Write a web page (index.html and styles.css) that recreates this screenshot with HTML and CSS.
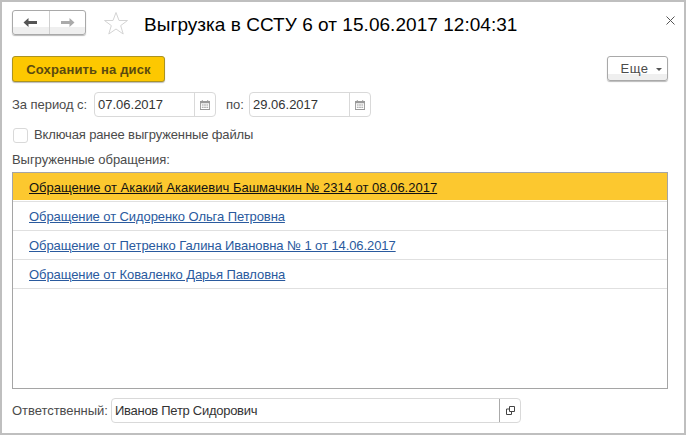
FILE: index.html
```html
<!DOCTYPE html>
<html lang="ru">
<head>
  <meta charset="UTF-8">
  <title>Выгрузка в ССТУ 6</title>
  <link rel="stylesheet" href="styles.css">
</head>
<body>
  <div class="window">
    <!-- заголовок -->
    <div class="header">
      <div class="nav">
        <button class="nav-btn">
          <svg width="15" height="11" viewBox="0 0 15 11"><path d="M0.5 5.5L5.5 1V4H14V7H5.5V10Z" fill="#555"/></svg>
        </button>
        <button class="nav-btn">
          <svg width="15" height="11" viewBox="0 0 15 11"><path d="M14.5 5.5L9.5 1V4H1V7H9.5V10Z" fill="#aaa"/></svg>
        </button>
      </div>
      <svg class="star" width="26" height="25" viewBox="0 0 26 25"><path d="M13 1.5L16 9.5H24.5L17.7 14.6L20.2 23L13 18L5.8 23L8.3 14.6L1.5 9.5H10Z" fill="#fff" stroke="#d4d4d4"/></svg>
      <h1 class="title">Выгрузка в ССТУ 6 от 15.06.2017 12:04:31</h1>
      <svg class="close" width="9" height="9" viewBox="0 0 9 9"><path d="M0.5 0.5L8.5 8.5M8.5 0.5L0.5 8.5" stroke="#555" fill="none"/></svg>
    </div>

    <!-- командная панель -->
    <div class="toolbar">
      <button class="save-btn">Сохранить на диск</button>
      <button class="more-btn">Еще<span class="caret"></span></button>
    </div>

    <!-- период -->
    <div class="period">
      <label class="label label-from">За период с:</label>
      <div class="field date-field">
        <span class="field-value">07.06.2017</span>
        <span class="field-btn">
          <svg width="10" height="10" viewBox="0 0 11 11"><path d="M0 1H2V0H3V1H8V0H9V1H11V11H0ZM1 3.5V10H10V3.5Z" fill="#999"/><path d="M2 5H4V6H2ZM4.5 5H6.5V6H4.5ZM7 5H9V6H7ZM2 7.5H4V8.5H2ZM4.5 7.5H6.5V8.5H4.5ZM7 7.5H9V8.5H7Z" fill="#999"/></svg>
        </span>
      </div>
      <label class="label label-to">по:</label>
      <div class="field date-field">
        <span class="field-value">29.06.2017</span>
        <span class="field-btn">
          <svg width="10" height="10" viewBox="0 0 11 11"><path d="M0 1H2V0H3V1H8V0H9V1H11V11H0ZM1 3.5V10H10V3.5Z" fill="#999"/><path d="M2 5H4V6H2ZM4.5 5H6.5V6H4.5ZM7 5H9V6H7ZM2 7.5H4V8.5H2ZM4.5 7.5H6.5V8.5H4.5ZM7 7.5H9V8.5H7Z" fill="#999"/></svg>
        </span>
      </div>
    </div>

    <div class="check-row">
      <span class="checkbox"></span>
      <span class="label check-label">Включая ранее выгруженные файлы</span>
    </div>

    <div class="list-title label">Выгруженные обращения:</div>

    <div class="list">
      <div class="list-row selected"><a href="#">Обращение от Акакий Акакиевич Башмачкин № 2314 от 08.06.2017</a></div>
      <div class="list-row"><a href="#">Обращение от Сидоренко Ольга Петровна</a></div>
      <div class="list-row"><a href="#">Обращение от Петренко Галина Ивановна № 1 от 14.06.2017</a></div>
      <div class="list-row"><a href="#">Обращение от Коваленко Дарья Павловна</a></div>
    </div>

    <div class="owner">
      <label class="label label-owner">Ответственный:</label>
      <div class="field owner-field">
        <span class="field-value">Иванов Петр Сидорович</span>
        <span class="field-btn owner-btn">
          <svg width="9" height="9" viewBox="0 0 9 9"><path d="M3.5 0.5H8.5V5.5H3.5Z" fill="none" stroke="#444"/><path d="M0.5 8.5V3H3M0.5 8.5H5.5V6" fill="none" stroke="#444"/></svg>
        </span>
      </div>
    </div>
  </div>
</body>
</html>
```

FILE: styles.css
```css
* {
  box-sizing: border-box;
}
body {
  margin: 0;
  font-family: "Liberation Sans", Arial, sans-serif;
  font-size: 13px;
  background-color: #fff;
}
.window {
  width: 686px;
  height: 435px;
  border: 2px solid #bfbfbf;
  padding: 0 16px 0 10px;
  background-color: #fff;
  display: flex;
  flex-direction: column;
}
.label {
  color: #4b4b4b;
  font-size: 13px;
  letter-spacing: -0.05px;
}

/* заголовок */
.header {
  display: flex;
  align-items: center;
  height: 44px;
  padding-top: 1px;
}
.nav {
  display: flex;
  flex: none;
  width: 74px;
  height: 25px;
  margin-bottom: 4px;
  border: 1px solid #a9a9a9;
  border-radius: 3px;
  background: linear-gradient(#fff 0, #fff 16px, #efefef 16px);
  box-shadow: 0 1px 1px #bbb;
}
.nav-btn {
  flex: 1;
  padding: 0;
  border: none;
  background: none;
  display: flex;
  align-items: center;
  justify-content: center;
}
.nav-btn + .nav-btn {
  border-left: 1px solid #cfcfcf;
}
.star {
  margin-left: 17px;
  margin-bottom: 2px;
}
.title {
  margin: 0 0 0 15px;
  font-size: 19px;
  font-weight: normal;
  color: #000;
  flex: 1;
  letter-spacing: 0.04px;
}
.close {
  margin-right: -7px;
  margin-bottom: 9px;
}

/* командная панель */
.toolbar {
  display: flex;
  justify-content: space-between;
  align-items: flex-start;
  margin-top: 10px;
  height: 26px;
}
.save-btn {
  width: 153px;
  height: 26px;
  padding: 0;
  font: bold 13px "Liberation Sans", Arial, sans-serif;
  letter-spacing: 0.15px;
  color: #5a4a10;
  background: #fdc800;
  border: 1px solid #ab9321;
  border-radius: 3px;
  box-shadow: 0 1px 1px #bbb;
}
.more-btn {
  width: 61px;
  height: 25px;
  padding: 0 0 0 8px;
  font: 13px "Liberation Sans", Arial, sans-serif;
  letter-spacing: 0.5px;
  color: #4b4b4b;
  border: 1px solid #a9a9a9;
  border-radius: 3px;
  background: linear-gradient(#fff 0, #fff 17px, #efefef 17px);
  box-shadow: 0 1px 1px #bbb;
}
.caret {
  display: inline-block;
  margin-left: 8px;
  vertical-align: middle;
  border-top: 3px solid #555;
  border-left: 3px solid transparent;
  border-right: 3px solid transparent;
}

/* поля */
.period {
  display: flex;
  align-items: center;
  margin-top: 10px;
  height: 25px;
}
.label-from {
  width: 82px;
}
.label-to {
  width: 33px;
  padding-left: 10px;
}
.label-owner {
  width: 99px;
}
.field {
  display: flex;
  height: 25px;
  border: 1px solid #d9d9d9;
  border-radius: 4px;
  background-color: #fff;
}
.field-value {
  flex: 1;
  padding: 0 3px;
  line-height: 23px;
  color: #333;
  font-size: 13px;
}
.field-btn {
  width: 21px;
  border-left: 1px solid #d9d9d9;
  display: flex;
  align-items: center;
  justify-content: center;
}
.owner-btn {
  padding-left: 1px;
  border-left-color: #aaa;
}
.date-field {
  width: 122px;
}

.check-row {
  display: flex;
  align-items: center;
  margin-top: 10px;
  height: 16px;
}
.checkbox {
  width: 15px;
  height: 15px;
  margin-left: 1px;
  margin-right: 6px;
  border: 1px solid #d9d9d9;
  border-radius: 3px;
}
.check-label {
  margin-top: -2px;
  letter-spacing: -0.13px;
}
.list-title {
  margin-top: 9px;
  line-height: 16px;
}

/* список */
.list {
  margin-top: 4px;
  height: 217px;
  border: 1px solid #a5a5a5;
  display: flex;
  flex-direction: column;
}
.list-row {
  height: 29px;
  flex: none;
  padding-left: 16px;
  line-height: 29px;
  border-bottom: 1px solid #e0e0e0;
}
.list-row a {
  color: #2a5a9e;
  font-size: 13px;
  letter-spacing: -0.08px;
}
.list-row.selected {
  background: linear-gradient(#fcc82f 0, #fcc82f 27px, #fff 27px);
}
.list-row.selected a {
  color: #111;
  letter-spacing: 0;
}

.owner {
  display: flex;
  align-items: center;
  margin-top: 9px;
}
.owner-field {
  width: 410px;
}
.owner-field .field-value {
  letter-spacing: -0.28px;
}
```
